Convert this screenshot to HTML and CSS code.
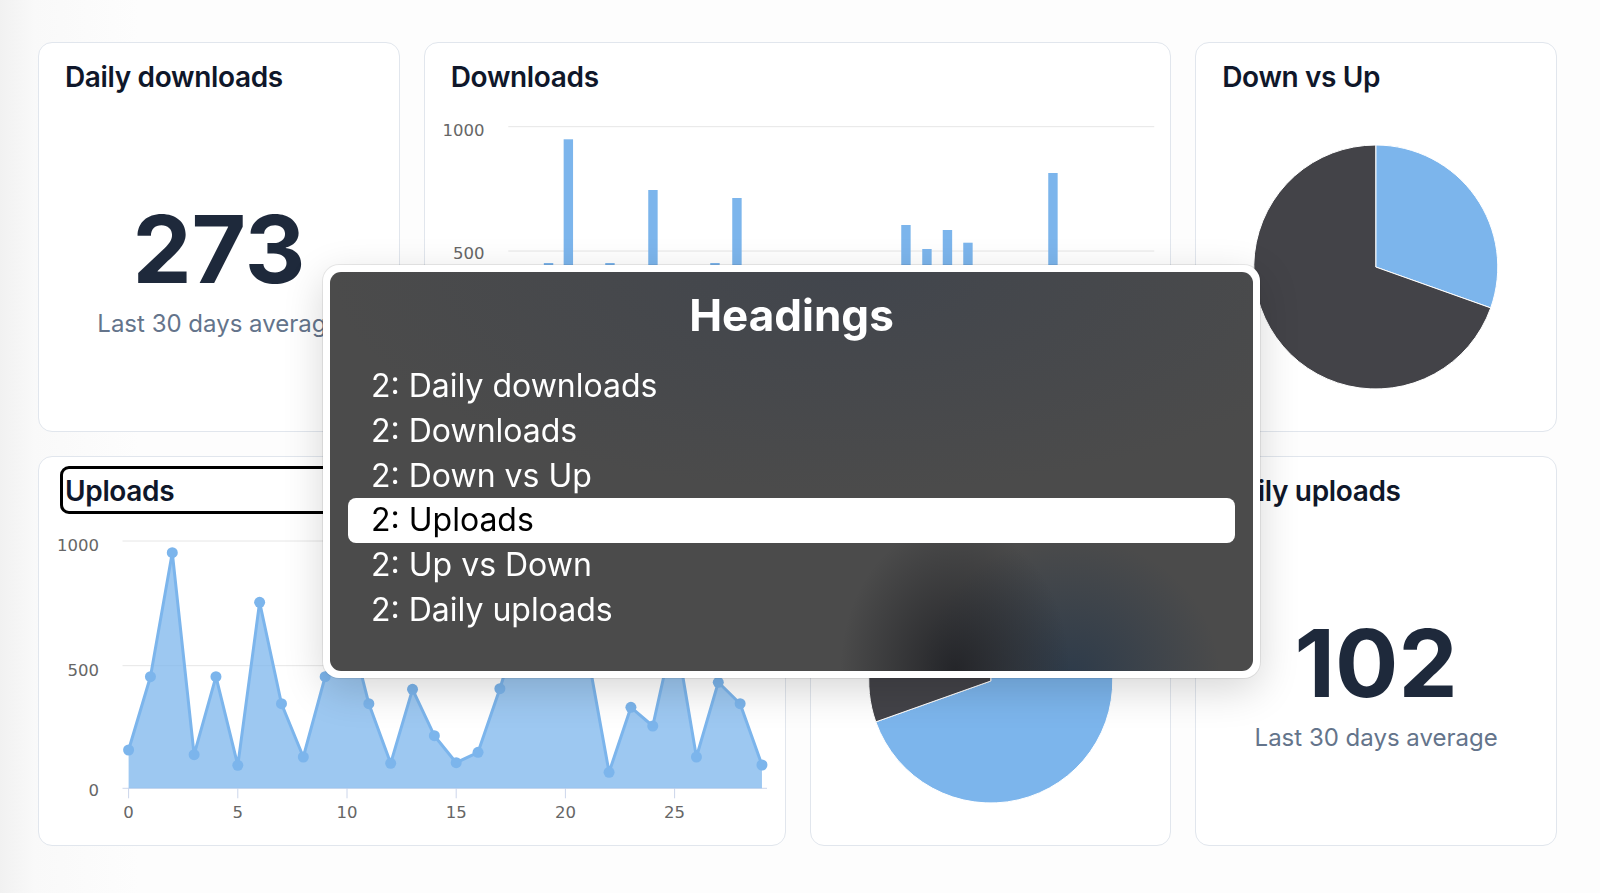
FILE: index.html
```html
<!DOCTYPE html>
<html lang="en">
<head>
  <meta charset="UTF-8">
  <meta name="viewport" content="width=device-width, initial-scale=1.0">
  <title>Stats dashboard</title>
  <link rel="stylesheet" href="styles.css">
</head>
<body>

  <main class="dashboard">
    <!-- Row 1 -->
    <section class="card">
      <h2 class="card-title">Daily downloads</h2>
      <div class="stat">
        <div class="stat-value">273</div>
        <div class="stat-label">Last 30 days average</div>
      </div>
    </section>

    <section class="card wide">
      <h2 class="card-title">Downloads</h2>
      <div class="chart">
        <svg>
          <g class="grid">
            <line x1="83.25" y1="32.7" x2="729.25" y2="32.7"/>
            <line x1="83.25" y1="157" x2="729.25" y2="157"/>
            <line x1="83.25" y1="281" x2="729.25" y2="281"/>
          </g>
          <text class="axis-label" x="59.5" y="42" text-anchor="end">1000</text>
          <text class="axis-label" x="59.5" y="164.7" text-anchor="end">500</text>
          <g class="bars">
            <rect x="118.85" y="169" width="9.4" height="112"/>
            <rect x="138.65" y="45.3" width="9.4" height="235.7"/>
            <rect x="180.25" y="169" width="9.4" height="112"/>
            <rect x="223.25" y="96" width="9.4" height="185"/>
            <rect x="285.25" y="169" width="9.4" height="112"/>
            <rect x="307.25" y="104" width="9.4" height="177"/>
            <rect x="476.25" y="131" width="9.4" height="150"/>
            <rect x="497.25" y="155" width="9.4" height="126"/>
            <rect x="517.75" y="136" width="9.4" height="145"/>
            <rect x="538.25" y="148.7" width="9.4" height="132.3"/>
            <rect x="623.25" y="79" width="9.4" height="202"/>
          </g>
        </svg>
      </div>
    </section>

    <section class="card">
      <h2 class="card-title">Down vs Up</h2>
      <div class="chart">
        <svg>
          <path class="slice-blue" d="M179.75 173 L179.75 51 A122 122 0 0 1 294.7 213.9 Z"/>
          <path class="slice-dark" d="M179.75 173 L294.7 213.9 A122 122 0 1 1 179.75 51 Z"/>
        </svg>
      </div>
    </section>

    <!-- Row 2 -->
    <section class="card wide">
      <h2 class="card-title focused">Uploads</h2>
      <div class="chart">
        <svg>
          <g class="grid">
            <line x1="83.5" y1="33" x2="728" y2="33"/>
            <line x1="83.5" y1="157.7" x2="728" y2="157.7"/>
          </g>
          <g class="axis">
            <line x1="83.5" y1="280.3" x2="728" y2="280.3"/>
            <line x1="89.6" y1="280.3" x2="89.6" y2="290.3"/>
            <line x1="198.8" y1="280.3" x2="198.8" y2="290.3"/>
            <line x1="308" y1="280.3" x2="308" y2="290.3"/>
            <line x1="417.2" y1="280.3" x2="417.2" y2="290.3"/>
            <line x1="526.4" y1="280.3" x2="526.4" y2="290.3"/>
            <line x1="635.6" y1="280.3" x2="635.6" y2="290.3"/>
          </g>
          <text class="axis-label" x="60" y="43" text-anchor="end">1000</text>
          <text class="axis-label" x="60" y="168" text-anchor="end">500</text>
          <text class="axis-label" x="60" y="288" text-anchor="end">0</text>
          <text class="axis-label" x="89.6" y="310" text-anchor="middle">0</text>
          <text class="axis-label" x="198.8" y="310" text-anchor="middle">5</text>
          <text class="axis-label" x="308" y="310" text-anchor="middle">10</text>
          <text class="axis-label" x="417.2" y="310" text-anchor="middle">15</text>
          <text class="axis-label" x="526.4" y="310" text-anchor="middle">20</text>
          <text class="axis-label" x="635.6" y="310" text-anchor="middle">25</text>

          <path class="area" d="M89.6 280.3 L89.6 242 L111.44 168.7 L133.28 44.7 L155.12 246.7 L176.96 168.7 L198.8 257.3 L220.64 94.3 L242.48 195.7 L264.32 249 L286.16 168.7 L308 110 L329.84 195.7 L351.68 255.3 L373.52 181.3 L395.36 227.7 L417.2 254.7 L439.04 244.3 L460.88 180.7 L482.72 110 L504.56 70 L526.4 95 L548.24 143.6 L570.08 264.3 L591.92 199.3 L613.76 218 L635.6 120 L657.44 249 L679.28 174.3 L701.12 195.7 L722.96 257 L722.96 280.3 Z"/>
          <polyline class="area-line" points="89.6,242 111.44,168.7 133.28,44.7 155.12,246.7 176.96,168.7 198.8,257.3 220.64,94.3 242.48,195.7 264.32,249 286.16,168.7 308,110 329.84,195.7 351.68,255.3 373.52,181.3 395.36,227.7 417.2,254.7 439.04,244.3 460.88,180.7 482.72,110 504.56,70 526.4,95 548.24,143.6 570.08,264.3 591.92,199.3 613.76,218 635.6,120 657.44,249 679.28,174.3 701.12,195.7 722.96,257"/>
          <g class="markers">
            <circle cx="89.6" cy="242" r="5.5"/>
            <circle cx="111.44" cy="168.7" r="5.5"/>
            <circle cx="133.28" cy="44.7" r="5.5"/>
            <circle cx="155.12" cy="246.7" r="5.5"/>
            <circle cx="176.96" cy="168.7" r="5.5"/>
            <circle cx="198.8" cy="257.3" r="5.5"/>
            <circle cx="220.64" cy="94.3" r="5.5"/>
            <circle cx="242.48" cy="195.7" r="5.5"/>
            <circle cx="264.32" cy="249" r="5.5"/>
            <circle cx="286.16" cy="168.7" r="5.5"/>
            <circle cx="308" cy="110" r="5.5"/>
            <circle cx="329.84" cy="195.7" r="5.5"/>
            <circle cx="351.68" cy="255.3" r="5.5"/>
            <circle cx="373.52" cy="181.3" r="5.5"/>
            <circle cx="395.36" cy="227.7" r="5.5"/>
            <circle cx="417.2" cy="254.7" r="5.5"/>
            <circle cx="439.04" cy="244.3" r="5.5"/>
            <circle cx="460.88" cy="180.7" r="5.5"/>
            <circle cx="482.72" cy="110" r="5.5"/>
            <circle cx="504.56" cy="70" r="5.5"/>
            <circle cx="526.4" cy="95" r="5.5"/>
            <circle cx="548.24" cy="143.6" r="5.5"/>
            <circle cx="570.08" cy="264.3" r="5.5"/>
            <circle cx="591.92" cy="199.3" r="5.5"/>
            <circle cx="613.76" cy="218" r="5.5"/>
            <circle cx="635.6" cy="120" r="5.5"/>
            <circle cx="657.44" cy="249" r="5.5"/>
            <circle cx="679.28" cy="174.3" r="5.5"/>
            <circle cx="701.12" cy="195.7" r="5.5"/>
            <circle cx="722.96" cy="257" r="5.5"/>
          </g>
        </svg>
      </div>
    </section>

    <section class="card">
      <h2 class="card-title">Up vs Down</h2>
      <div class="chart">
        <svg>
          <path class="slice-blue" d="M179.75 173 L179.75 51 A122 122 0 1 1 64.8 213.9 Z"/>
          <path class="slice-dark" d="M179.75 173 L64.8 213.9 A122 122 0 0 1 179.75 51 Z"/>
        </svg>
      </div>
    </section>

    <section class="card">
      <h2 class="card-title">Daily uploads</h2>
      <div class="stat">
        <div class="stat-value">102</div>
        <div class="stat-label">Last 30 days average</div>
      </div>
    </section>
  </main>

  <!-- Screen reader rotor -->
  <div class="rotor">
    <div class="rotor-panel">
      <h1 class="rotor-title">Headings</h1>
      <ul class="rotor-list">
        <li>2: Daily downloads</li>
        <li>2: Downloads</li>
        <li>2: Down vs Up</li>
        <li class="active">2: Uploads</li>
        <li>2: Up vs Down</li>
        <li>2: Daily uploads</li>
      </ul>
    </div>
  </div>

</body>
</html>
```

FILE: styles.css
```css
* {
  box-sizing: border-box;
}

body {
  margin: 0;
  height: 893px;
  overflow: hidden;
  font-family: Inter, "Noto Sans", sans-serif;
  color: #0f172a;
  background: linear-gradient(90deg, #f1f1f1 0, #f9f9f9 34px, #fdfdfd 140px);
}

.dashboard {
  display: grid;
  grid-template-columns: repeat(4, 1fr);
  grid-auto-rows: 390px;
  gap: 24px;
  padding: 42px 43px 0 38px;
}

.card {
  background-color: #fff;
  border: 1px solid #e1e6ed;
  border-radius: 14px;
  padding: 17px 26px 0;
  overflow: hidden;
}

.card.wide {
  grid-column: span 2;
}

.card-title {
  margin: 0;
  font-size: 28px;
  font-weight: 600;
  line-height: 34px;
  letter-spacing: -0.35px;
  color: #0f172a;
}

/* screen reader cursor */
.card-title.focused {
  position: relative;
}

.card-title.focused::after {
  content: "";
  position: absolute;
  left: -5px;
  right: -5px;
  top: -8px;
  bottom: -6px;
  border: 3px solid #000;
  border-radius: 9px;
}

.stat {
  margin-top: 108px;
  text-align: center;
}

.stat-value {
  font-size: 94px;
  font-weight: 700;
  line-height: 94px;
  color: #1e293b;
}

.stat-label {
  margin-top: 13px;
  font-size: 24px;
  line-height: 29px;
  color: #64748b;
}

/* Charts */
.chart {
  margin: 0 -26px;
}

.chart svg {
  display: block;
  width: 100%;
  height: 337px;
}

.grid line {
  stroke: #e6e6e6;
  stroke-width: 1;
}

.axis line {
  stroke: #ccd6eb;
  stroke-width: 1;
}

.axis-label {
  font-family: "DejaVu Sans", sans-serif;
  font-size: 16.5px;
  fill: #666;
}

.bars rect {
  fill: #7cb5ec;
}

.area {
  fill: #7cb5ec;
  fill-opacity: 0.75;
}

.area-line {
  fill: none;
  stroke: #7cb5ec;
  stroke-width: 3;
  stroke-linejoin: round;
}

.markers circle {
  fill: #7cb5ec;
}

.slice-blue,
.slice-dark {
  stroke: #fff;
  stroke-width: 1;
  stroke-linejoin: round;
}

.slice-blue {
  fill: #7cb5ec;
}

.slice-dark {
  fill: #434348;
}

/* Rotor overlay */
.rotor {
  position: fixed;
  left: 323px;
  top: 265px;
  width: 937px;
  height: 413px;
  padding: 7px;
  background-color: #fff;
  border-radius: 16px;
  box-shadow: 0 0 0 1px rgba(0, 0, 0, 0.08), 0 12px 40px rgba(0, 0, 0, 0.16);
}

.rotor-panel {
  height: 100%;
  padding-top: 17px;
  border-radius: 11px;
  color: #fff;
  background:
    radial-gradient(ellipse 115px 150px at 625px 400px, rgba(33, 34, 38, 0.92), rgba(33, 34, 38, 0)),
    radial-gradient(ellipse 150px 140px at 740px 405px, rgba(40, 56, 74, 0.85), rgba(40, 56, 74, 0)),
    radial-gradient(ellipse 520px 220px at 520px 0, rgba(63, 68, 77, 0.8), rgba(63, 68, 77, 0)),
    #4b4b4b;
}

.rotor-title {
  margin: 0;
  text-align: center;
  font-size: 44px;
  font-weight: 700;
  line-height: 53px;
}

.rotor-list {
  list-style: none;
  margin: 22px 0 0;
  padding: 0 18px;
}

.rotor-list li {
  padding-left: 23px;
  font-size: 32px;
  line-height: 44.8px;
  border-radius: 8px;
}

.rotor-list li.active {
  background-color: #fff;
  color: #000;
}
```
